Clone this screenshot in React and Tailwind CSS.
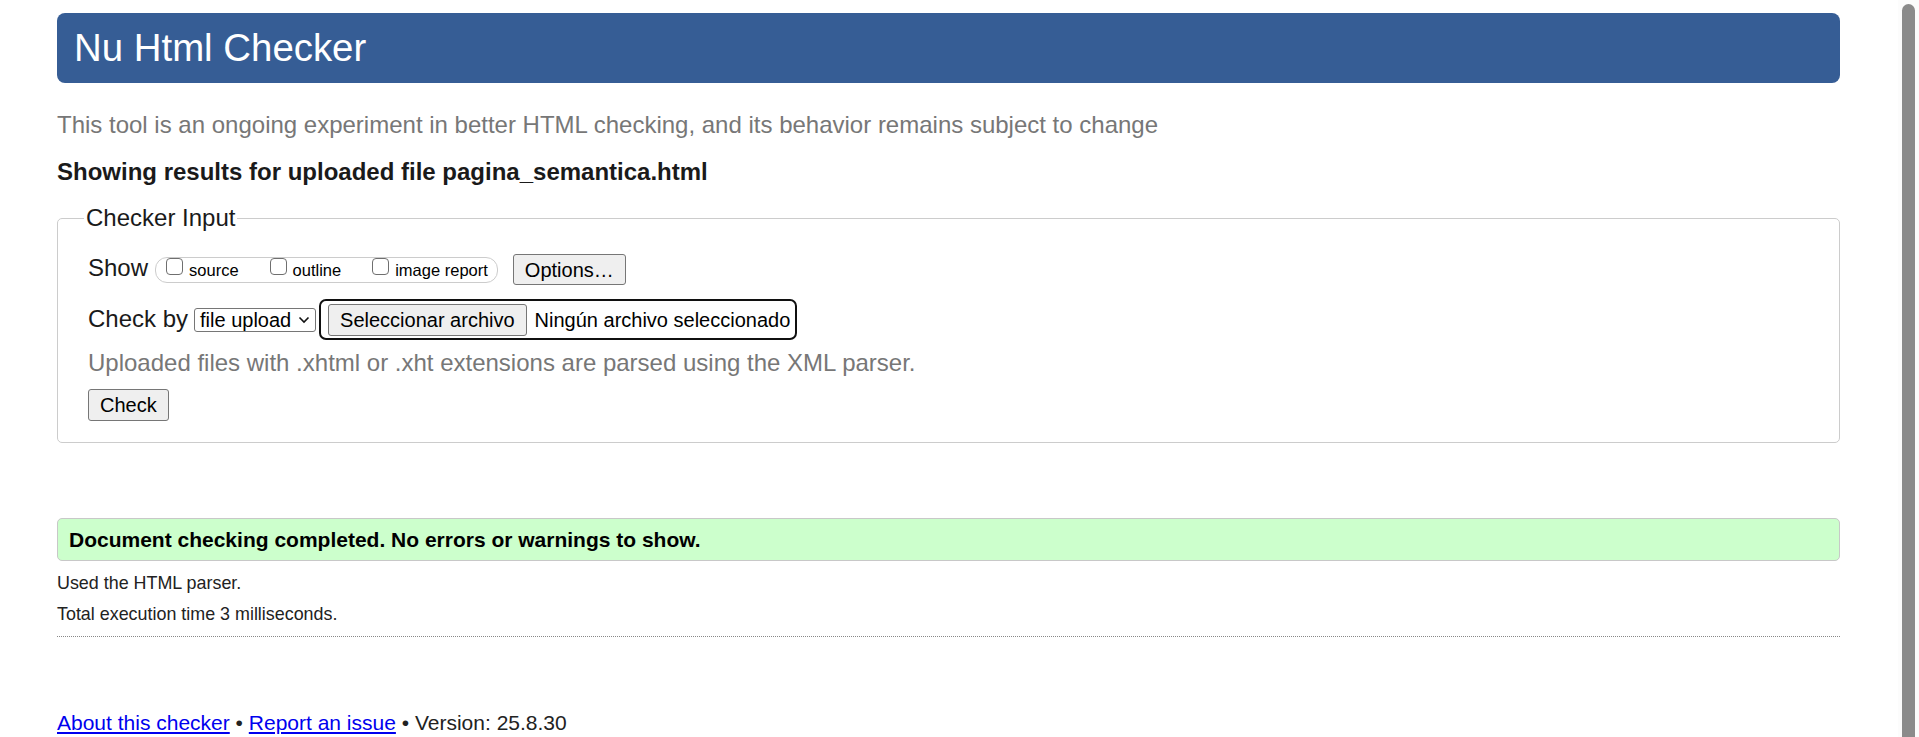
import React from "react";

function Check({ label }) {
  return (
    <label className="flex items-start gap-[6px]">
      <input
        type="checkbox"
        className="m-0 h-[17px] w-[17px] appearance-none rounded-[4px] border-[1.5px] border-[#6f6f6f] bg-white"
      />
      <span className="mt-[4px] text-[16.5px] leading-[17px] text-black">{label}</span>
    </label>
  );
}

function App() {
  return (
    <div className="flex h-[737px] w-full overflow-hidden bg-white font-['Liberation_Sans',Arial,sans-serif] text-[#222]">
      <div className="min-w-0 flex-1 pl-[57px] pr-[58px] pt-[13px]">
        <header className="flex h-[70px] items-center rounded-[8px] bg-[#365d95] pl-[17px]">
          <h1 className="text-[38.4px] font-normal leading-none text-white">Nu Html Checker</h1>
        </header>

        <p className="mt-[28px] text-[24px] leading-[28px] text-[#777]">
          This tool is an ongoing experiment in better HTML checking, and its behavior remains subject to change
        </p>

        <p className="mt-[19px] text-[24px] font-bold leading-[28px] text-[#1a1a1a]">
          Showing results for uploaded file pagina_semantica.html
        </p>

        <fieldset className="mt-[18px] rounded-[5px] border border-[#ccc] px-[26px] pb-[21px]">
          <legend className="px-[2px] text-[24px] leading-[28px] text-[#1a1a1a]">Checker Input</legend>

          <div className="mt-[22px] flex h-[31px] items-center pl-[4px]">
            <span className="mb-[4px] text-[24px] leading-[28px] text-[#1a1a1a]">Show</span>
            <div className="ml-[7px] flex h-[26px] items-start gap-[31px] rounded-[12px] border border-[#ccc] pl-[10px] pr-[9px]">
              <Check label="source" />
              <Check label="outline" />
              <Check label="image report" />
            </div>
            <button className="ml-[15px] h-[31px] rounded-[3px] border border-[#767676] bg-[#efefef] px-[11px] text-[20px] leading-none text-black">
              Options…
            </button>
          </div>

          <div className="mt-[14px] flex h-[41px] items-center pl-[4px]">
            <span className="mb-[2px] text-[24px] leading-[28px] text-[#1a1a1a]">Check by</span>
            <div className="ml-[6px] flex h-[24px] w-[122px] items-center justify-between rounded-[3px] border border-[#767676] bg-white pl-[5px] pr-[5px] text-[20px] leading-none text-black">
              <span>file upload</span>
              <svg width="12" height="8" viewBox="0 0 12 8" fill="none">
                <path d="M1.5 1.5 L6 6 L10.5 1.5" stroke="#111" strokeWidth="1.6" />
              </svg>
            </div>
            <div className="ml-[3px] flex h-[41px] w-[478px] items-center rounded-[7px] border-2 border-[#101010] pl-[7px]">
              <span className="flex h-[32px] items-center rounded-[3px] border border-[#767676] bg-[#efefef] px-[11px] text-[20px] leading-none text-black">
                Seleccionar archivo
              </span>
              <span className="ml-[8px] text-[20px] leading-none text-black">Ningún archivo seleccionado</span>
            </div>
          </div>

          <p className="mt-[9px] pl-[4px] text-[24px] leading-[28px] text-[#777]">
            Uploaded files with .xhtml or .xht extensions are parsed using the XML parser.
          </p>

          <div className="mt-[12px] pl-[4px]">
            <button className="h-[32px] rounded-[3px] border border-[#767676] bg-[#efefef] px-[11px] text-[20px] leading-none text-black">
              Check
            </button>
          </div>
        </fieldset>

        <div className="mt-[75px] flex h-[43px] items-center rounded-[5px] border border-[#c8c8c8] bg-[#ccffcc] pl-[11px] text-[21px] font-bold text-black">
          Document checking completed. No errors or warnings to show.
        </div>

        <p className="mt-[11px] text-[17.9px] leading-[22px]">Used the HTML parser.</p>
        <p className="mt-[9px] text-[17.9px] leading-[22px]">Total execution time 3 milliseconds.</p>

        <hr className="mt-[11px] border-0 border-t border-dotted border-[#888]" />

        <p className="mt-[73px] text-[21px] leading-[25px]">
          <a href="#" className="text-[#0000ee] underline">About this checker</a>
          {" • "}
          <a href="#" className="text-[#0000ee] underline">Report an issue</a>
          {" • Version: 25.8.30"}
        </p>
      </div>

      <div className="w-[21px] shrink-0 bg-[#fcfcfc] pl-[4px] pt-[4px]">
        <div className="h-[760px] w-[13px] rounded-full bg-[#8b8b8b]" />
      </div>
    </div>
  );
}

export default App;
